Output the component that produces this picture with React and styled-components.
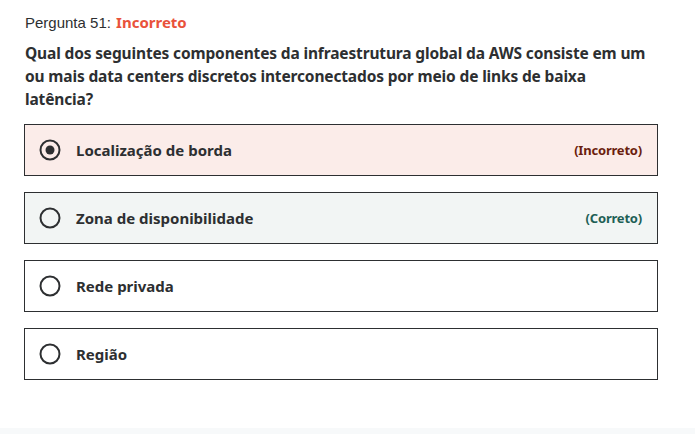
import React from "react";
import styled, { createGlobalStyle } from "styled-components";

const Global = createGlobalStyle`
  html, body { margin: 0; padding: 0; background: #ffffff; }
  body { width: 695px; height: 434px; overflow: hidden; }
`;

const Page = styled.div`
  width: 695px;
  height: 434px;
  display: flex;
  flex-direction: column;
  background: #ffffff;
`;

const Content = styled.div`
  flex: 1;
  padding: 12px 37px 0 24px;
  display: flex;
  flex-direction: column;
`;

const Heading = styled.div`
  font-family: "Liberation Sans", Arial, sans-serif;
  font-size: 15px;
  color: #2d2f31;
  line-height: 20px;
  padding-left: 1px;
`;

const Status = styled.span`
  font-family: "Noto Sans", sans-serif;
  font-weight: 700;
  color: #e9523b;
  margin-left: 1px;
`;

const Question = styled.div`
  margin-top: 9px;
  font-family: "Noto Sans", sans-serif;
  font-weight: 700;
  font-size: 15.5px;
  line-height: 23px;
  color: #2d2f31;
  padding-left: 1px;
  letter-spacing: -0.15px;
`;

const Options = styled.div`
  margin-top: 13px;
  display: flex;
  flex-direction: column;
  gap: 16px;
`;

const Option = styled.div`
  height: 52px;
  box-sizing: border-box;
  border: 1px solid #2d2f31;
  background: ${(p) =>
    p.$state === "incorrect" ? "#fbece9" : p.$state === "correct" ? "#f2f5f4" : "#ffffff"};
  display: flex;
  align-items: center;
  padding: 0 15px 0 14px;
  gap: 15px;
`;

const Label = styled.span`
  flex: 1;
  font-family: "Noto Sans", sans-serif;
  font-weight: 700;
  font-size: 15px;
  color: #2d2f31;
`;

const Verdict = styled.span`
  font-family: "Noto Sans", sans-serif;
  font-weight: 700;
  font-size: 13px;
  letter-spacing: -0.2px;
  color: ${(p) => (p.$state === "incorrect" ? "#6b1e0e" : "#1e6055")};
`;

const Footer = styled.div`
  height: 6px;
  background: #f7f9fa;
`;

const Radio = ({ checked }) => (
  <svg width="22" height="22" viewBox="0 0 22 22">
    <circle cx="11" cy="11" r="9.5" fill="none" stroke="#2d2f31" strokeWidth="2" />
    {checked && <circle cx="11" cy="11" r="4.5" fill="#2d2f31" />}
  </svg>
);

const options = [
  { label: "Localização de borda", state: "incorrect", checked: true, verdict: "(Incorreto)" },
  { label: "Zona de disponibilidade", state: "correct", verdict: "(Correto)" },
  { label: "Rede privada" },
  { label: "Região" },
];

export default function App() {
  return (
    <Page>
      <Global />
      <Content>
        <Heading>
          Pergunta 51: <Status>Incorreto</Status>
        </Heading>
        <Question>
          Qual dos seguintes componentes da infraestrutura global da AWS consiste em um
          <br />
          ou mais data centers discretos interconectados por meio de links de baixa
          <br />
          latência?
        </Question>
        <Options>
          {options.map((o) => (
            <Option key={o.label} $state={o.state}>
              <Radio checked={o.checked} />
              <Label>{o.label}</Label>
              {o.verdict && <Verdict $state={o.state}>{o.verdict}</Verdict>}
            </Option>
          ))}
        </Options>
      </Content>
      <Footer />
    </Page>
  );
}
